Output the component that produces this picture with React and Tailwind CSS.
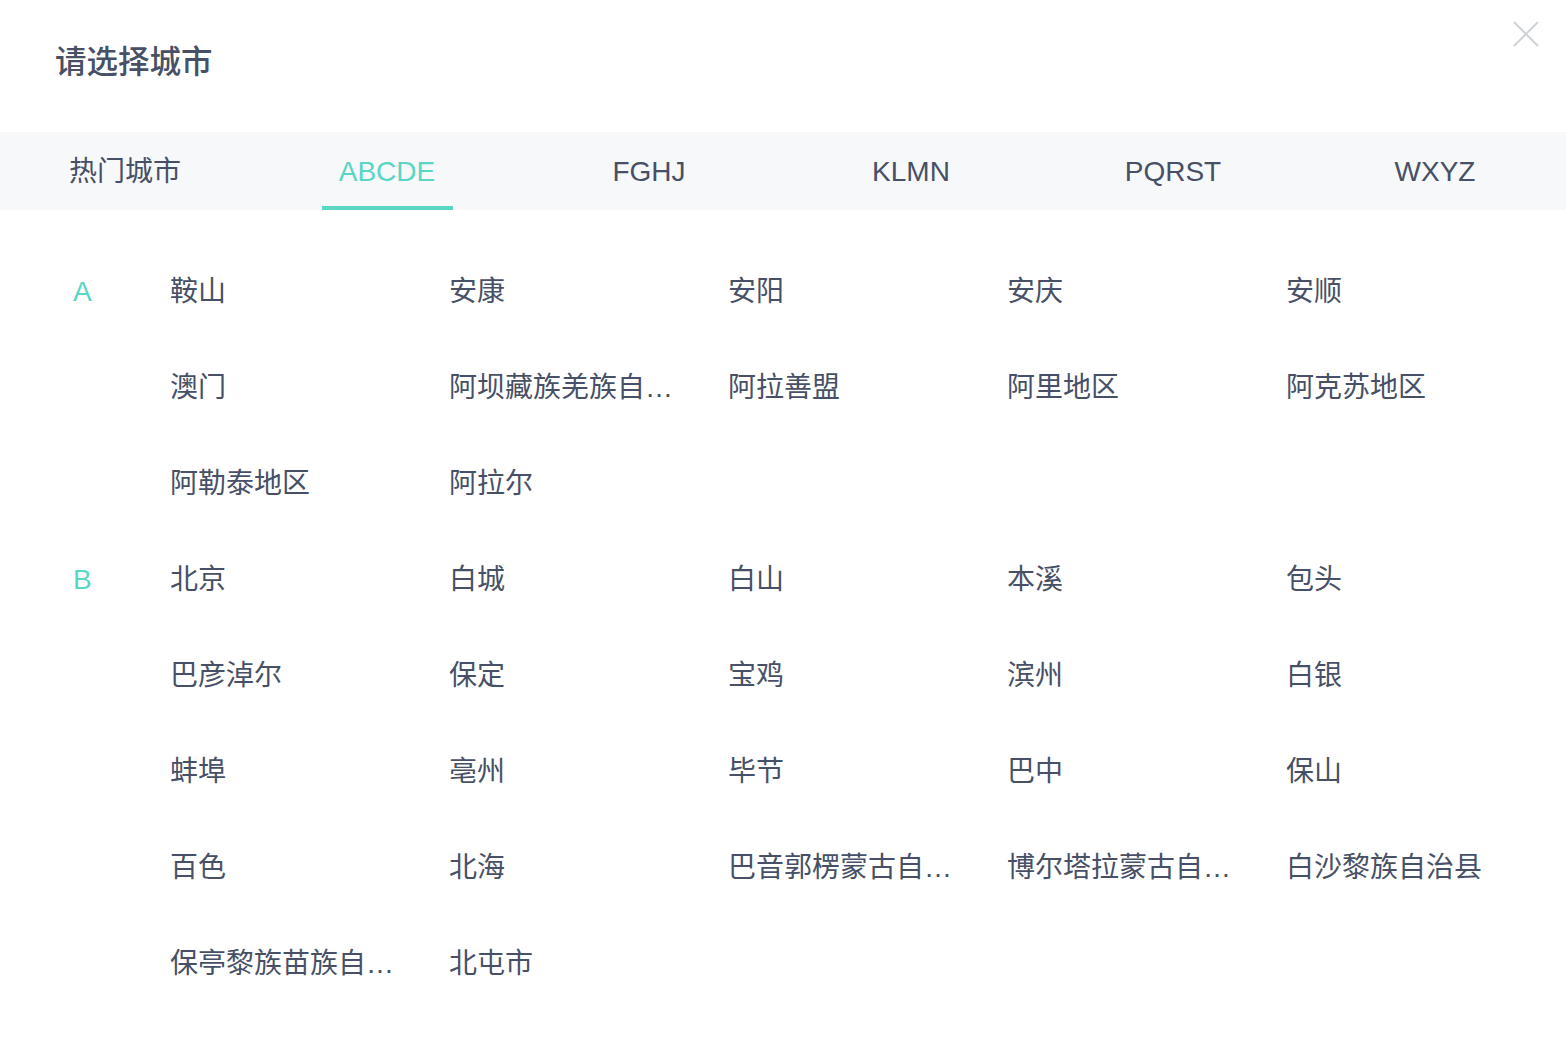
import React from "react";

const tabs = ["热门城市", "ABCDE", "FGHJ", "KLMN", "PQRST", "WXYZ"];

const groups = [
  {
    letter: "A",
    cities: [
      "鞍山", "安康", "安阳", "安庆", "安顺",
      "澳门", "阿坝藏族羌族自治州", "阿拉善盟", "阿里地区", "阿克苏地区",
      "阿勒泰地区", "阿拉尔",
    ],
  },
  {
    letter: "B",
    cities: [
      "北京", "白城", "白山", "本溪", "包头",
      "巴彦淖尔", "保定", "宝鸡", "滨州", "白银",
      "蚌埠", "亳州", "毕节", "巴中", "保山",
      "百色", "北海", "巴音郭楞蒙古自治州", "博尔塔拉蒙古自治州", "白沙黎族自治县",
      "保亭黎族苗族自治县", "北屯市",
    ],
  },
];

export default function App() {
  const font = { fontFamily: '"Liberation Sans", "Noto Sans CJK SC", sans-serif' };

  return (
    <div className="w-[1566px] h-[1042px] bg-white overflow-hidden text-[#475066]" style={font}>
      {/* 标题 */}
      <div className="relative h-[132px] flex items-center pl-[55px] pb-[6px]">
        <h1 className="text-[31.5px] font-medium leading-none">请选择城市</h1>
        <button className="absolute right-[27px] top-[21px] w-[26px] h-[26px]">
          <svg viewBox="0 0 26 26" className="w-full h-full">
            <path d="M1 1 L25 25 M25 1 L1 25" stroke="#d0d3da" strokeWidth="2" fill="none" />
          </svg>
        </button>
      </div>

      {/* タブ */}
      <div className="h-[78px] bg-[#f7f8f9] overflow-hidden">
        <div className="flex ml-[-6px] h-full">
          {tabs.map((t, i) => (
            <div key={t} className="w-[262px] shrink-0 h-full flex flex-col items-center">
              <div
                className={
                  "flex-1 flex items-center text-[28px] leading-none pt-[6px] " +
                  (i === 1 ? "text-[#5ad6c5]" : "text-[#475066]")
                }
              >
                {t}
              </div>
              <div className={"w-[131px] h-[4px] " + (i === 1 ? "bg-[#5ad6c5]" : "bg-transparent")} />
            </div>
          ))}
        </div>
      </div>

      {/* 都市リスト */}
      <div className="pt-[34px] pl-[73px]">
        {groups.map((g) => (
          <div key={g.letter} className="flex">
            <div className="w-[98px] h-[96px] flex items-center text-[28px] text-[#5ad6c5] leading-none">
              {g.letter}
            </div>
            <div className="grid grid-cols-[repeat(5,279px)] ml-[-1px]">
              {g.cities.map((c) => (
                <div key={c} className="h-[96px] flex items-center pr-[52px]">
                  <span className="block w-full text-[28px] leading-[40px] whitespace-nowrap overflow-hidden text-ellipsis">
                    {c}
                  </span>
                </div>
              ))}
            </div>
          </div>
        ))}
      </div>
    </div>
  );
}
